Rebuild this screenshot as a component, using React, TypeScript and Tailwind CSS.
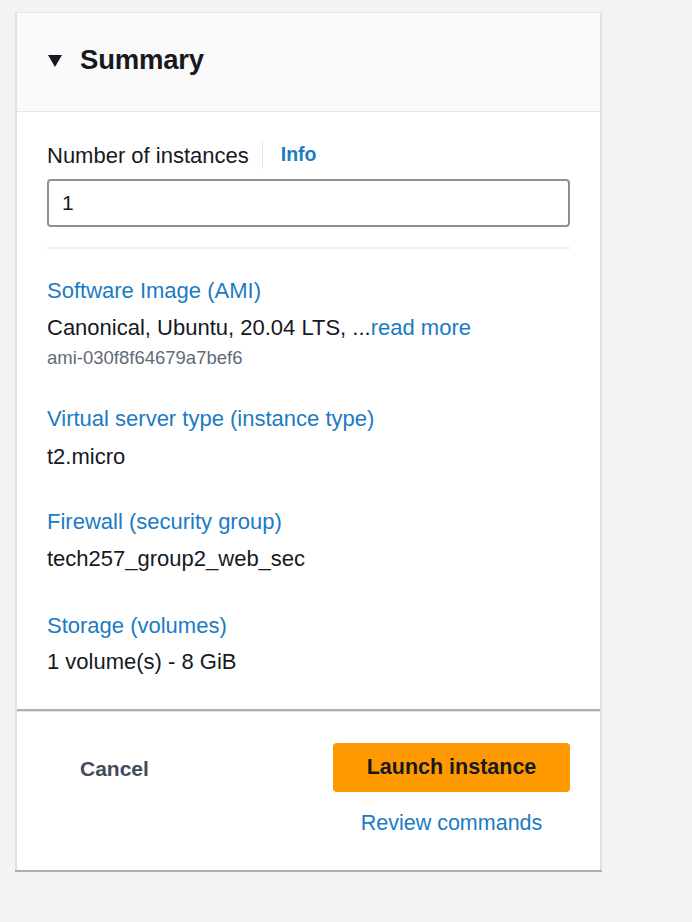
import React from 'react';

const font = { fontFamily: '"Liberation Sans", Arial, sans-serif' };

const Field = ({ label, top, gap, children }: { label: string; top: string; gap: string; children: React.ReactNode }) => (
    <div className={top}>
        <div className="text-[22px] leading-[28px] text-[#1b7bc4]">{label}</div>
        <div className={gap}>{children}</div>
    </div>
);

export default function App() {
    return (
        <div className="min-h-[922px] w-[692px] bg-[#f2f3f3] pt-[12px] pl-[15px]" style={font}>
            <div className="w-[587px] bg-white border-l-[2px] border-r-[2px] border-[#dfe2e2] border-t border-t-[#e6e8e8] shadow-[0_2px_0_#aab1b2]">
                {/* Header */}
                <div className="h-[99px] bg-[#fafafa] border-b border-[#e4e7e7] flex items-center pl-[31px] pb-[4px]">
                    <svg width="14" height="12" viewBox="0 0 14 12" className="mr-[18px] mt-[1px]">
                        <path d="M0 0 H14 L7 12 Z" fill="#16191f" />
                    </svg>
                    <h2 className="text-[27.5px] font-bold text-[#16191f] tracking-[-0.2px]">Summary</h2>
                </div>

                {/* Body */}
                <div className="px-[30px] pt-[29px] pb-[33px] border-b-[2px] border-[#aab1b2]">
                    <div className="flex items-center h-[28px]">
                        <span className="text-[22px] text-[#16191f]">Number of instances</span>
                        <span className="ml-[13px] w-px h-[28px] bg-[#e4e7e7]" />
                        <span className="ml-[18px] text-[19.5px] font-bold text-[#1b7bc4]">Info</span>
                    </div>
                    <div className="mt-[10px] h-[48px] rounded-[4px] border-[2px] border-[#8d9096] flex items-center pl-[13px] text-[21px] text-[#16191f]">
                        1
                    </div>
                    <div className="mt-[20px] h-[2px] bg-[#eef0f0]" />

                    <div className="mt-[28px] text-[22px] leading-[28px] text-[#1b7bc4]">Software Image (AMI)</div>
                    <div className="mt-[9px] text-[22px] leading-[28px] text-[#16191f]">
                        Canonical, Ubuntu, 20.04 LTS, ...<span className="text-[#1b7bc4]">read more</span>
                    </div>
                    <div className="mt-[4px] text-[18.5px] leading-[24px] text-[#5f6b7a]">ami-030f8f64679a7bef6</div>

                    <Field label="Virtual server type (instance type)" top="mt-[35px]" gap="mt-[10px]">
                        <div className="text-[22px] leading-[28px] text-[#16191f]">t2.micro</div>
                    </Field>
                    <Field label="Firewall (security group)" top="mt-[37px]" gap="mt-[9px]">
                        <div className="text-[22px] leading-[28px] text-[#16191f]">tech257_group2_web_sec</div>
                    </Field>
                    <Field label="Storage (volumes)" top="mt-[39px]" gap="mt-[8px]">
                        <div className="text-[22px] leading-[28px] text-[#16191f]">1 volume(s) - 8 GiB</div>
                    </Field>
                </div>

                {/* Footer */}
                <div className="border-t border-[#e0e3e3] h-[159px] flex pr-[30px] pt-[31px]">
                    <div className="flex-1 pl-[63px] pt-[10px]">
                        <span className="text-[21px] font-bold text-[#414d5c]">Cancel</span>
                    </div>
                    <div className="flex flex-col items-center w-[237px]">
                        <button className="w-[237px] h-[49px] rounded-[4px] bg-[#ff9900] text-[21.5px] font-bold text-[#16191f]">
                            Launch instance
                        </button>
                        <span className="mt-[15px] text-[21.5px] text-[#1b7bc4]">Review commands</span>
                    </div>
                </div>
            </div>
        </div>
    );
}
